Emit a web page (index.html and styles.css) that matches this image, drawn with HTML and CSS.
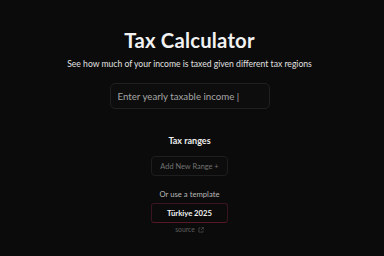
FILE: index.html
```html
<!DOCTYPE html>
<html>
<head>
<meta charset="utf-8">
<link rel="stylesheet" href="styles.css">
</head>
<body>
<main class="page">
  <h1 class="title">Tax Calculator</h1>
  <p class="subtitle">See how much of your income is taxed given different tax regions</p>
  <div class="income">Enter yearly taxable income |</div>
  <h2 class="ranges">Tax ranges</h2>
  <button class="add-btn">Add New Range +</button>
  <p class="or">Or use a template</p>
  <button class="tpl-btn">Türkiye 2025</button>
  <a class="source">source <svg class="ext" viewBox="0 0 10 10" width="6" height="6"><path d="M4 1.5H1.5v7h7V6" fill="none" stroke="currentColor" stroke-width="1"/><path d="M6 1h3v3M9 1L5 5" fill="none" stroke="currentColor" stroke-width="1"/></svg></a>
</main>
</body>
</html>
```
FILE: styles.css
```css
html, body {
  margin: 0;
  background: #0b0b0b;
  height: 100%;
}
.page {
  display: flex;
  flex-direction: column;
  align-items: center;
  font-family: Lato, "Noto Sans", sans-serif;
  color: #f2f2f2;
  padding-top: 27px;
  padding-right: 5px;
}
.title {
  margin: 0;
  font-size: 20.3px;
  font-weight: 700;
  line-height: 26px;
  letter-spacing: 0.2px;
}
.subtitle {
  margin: 4px 0 0;
  font-size: 8.6px;
  line-height: 14px;
  color: #e0e0e0;
}
.income {
  margin-top: 12px;
  box-sizing: border-box;
  width: 160px;
  height: 26px;
  border: 1px solid #202020;
  border-radius: 5px;
  background: #0d0d0d;
  padding: 0 7px;
  display: flex;
  align-items: center;
  white-space: nowrap;
  font-size: 9.7px;
  color: #a6a6a6;
}
.ranges {
  margin: 26px 0 0;
  font-size: 9px;
  line-height: 12px;
  font-weight: 700;
  color: #eeeeee;
}
.add-btn {
  margin-top: 9px;
  box-sizing: border-box;
  width: 77px;
  height: 20px;
  border: 1px solid #1e1e1e;
  border-radius: 4px;
  background: #0c0c0c;
  font-family: inherit;
  font-size: 7.4px;
  color: #727272;
  padding: 0;
}
.or {
  margin: 13px 0 0;
  font-size: 7.7px;
  line-height: 11px;
  color: #b8b8b8;
}
.tpl-btn {
  margin-top: 3px;
  box-sizing: border-box;
  width: 77px;
  height: 20px;
  border: 1px solid #3a1520;
  border-bottom-color: #561824;
  border-radius: 3px;
  background: #0b0b0b;
  font-family: inherit;
  font-size: 7.7px;
  font-weight: 700;
  color: #f2f2f2;
  padding: 0;
}
.source {
  margin-top: 2px;
  font-size: 6.8px;
  line-height: 9px;
  color: #5e5e5e;
  display: flex;
  align-items: center;
  gap: 3px;
}
.ext {
  color: #5e5e5e;
}
```
